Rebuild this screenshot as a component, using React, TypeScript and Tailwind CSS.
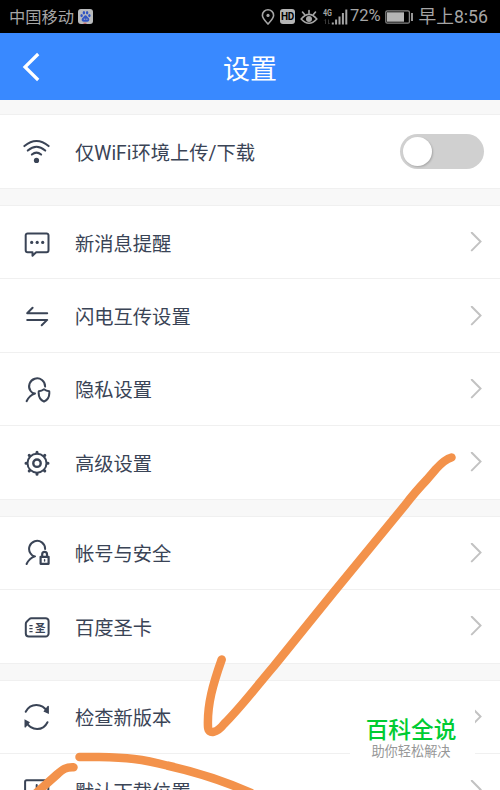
import type { ReactNode } from "react";

const stroke = {
  fill: "none",
  stroke: "currentColor",
  strokeWidth: 2,
  strokeLinecap: "round" as const,
  strokeLinejoin: "round" as const,
};

function Icon({ children }: { children: ReactNode }) {
  return (
    <svg viewBox="0 0 28 28" className="mt-px h-7 w-7 shrink-0 text-[#3a4456]" {...stroke}>
      {children}
    </svg>
  );
}

const icons = {
  wifi: (
    <Icon>
      <path d="M1.4 8.1Q13.5 -2 25.6 8.1M4.8 12.6Q13.5 4.9 22.2 12.6M8.9 16.6Q13.5 12.7 18.1 16.6" />
      <circle cx="13.5" cy="22.4" r="2.6" fill="currentColor" stroke="none" />
    </Icon>
  ),
  message: (
    <Icon>
      <path d="M4.6 4.4H23.6a1.9 1.9 0 0 1 1.9 1.9v15a1.9 1.9 0 0 1-1.9 1.9H13.2l-3.7 3.5v-3.5H4.6a1.9 1.9 0 0 1-1.9-1.9v-15a1.9 1.9 0 0 1 1.9-1.9z" />
      <g fill="currentColor" stroke="none">
        <circle cx="8.7" cy="13.4" r="1.6" />
        <circle cx="14.2" cy="13.4" r="1.6" />
        <circle cx="19.7" cy="13.4" r="1.6" />
      </g>
    </Icon>
  ),
  transfer: (
    <Icon>
      <path d="M24.2 11.2H4.2L9.6 5.7M4.2 17.9h20l-5.5 5.4" />
    </Icon>
  ),
  privacy: (
    <Icon>
      <path d="M22.1 10.6A8 8 0 1 0 7.6 15Q9 17.2 12 17.6Q6.6 19 3.6 25.2" />
      <path d="M21 13.3q2.3 1.8 5.2 1.9c.6 5-1 8.500-5.200 10.400c-4.200-1.900-5.800-5.400-5.200-10.400q2.900-.1 5.200-1.900z" />
    </Icon>
  ),
  gear: (
    <Icon>
      <circle cx="14" cy="14.2" r="9.5" />
      <circle cx="14" cy="14.2" r="3.7" strokeWidth="2.4" />
      <path
        strokeWidth="3"
        d="M14 3.200v.6M14 24.600v.6M3 14.200h.6M24.400 14.200h.6M6.200 6.400l.4.400M21.400 21.600l.4.400M21.800 6.400l-.4.400M6.600 21.600l-.4.400"
      />
    </Icon>
  ),
  account: (
    <Icon>
      <path d="M22.1 9.9A8 8 0 1 0 7.600 14.500Q9 17 12 17.400Q6.600 18.800 3.600 25" />
      <path strokeWidth="2.2" d="M17.600 17.800h8v7h-8zM19.200 17.500v-2.200a2.400 2.400 0 0 1 4.800 0v2.200" />
      <path strokeWidth="1.4" d="M21.600 20.800v1.200" />
    </Icon>
  ),
  card: (
    <Icon>
      <path d="M8.4 5.2H22.6a3 3 0 0 1 3 3v12.3a3 3 0 0 1-3 3H5.8a3 3 0 0 1-3-3V10.8a3 3 0 0 1 .9-2.100L6.300 6.100a3 3 0 0 1 2.100-.9z" />
      <path strokeLinecap="butt" strokeWidth="1.4" d="M6.400 12.600h3.200M6.400 15.600h3.200M6.400 18.600h3.200" />
      <text
        x="17.3"
        y="18.7"
        textAnchor="middle"
        fill="currentColor"
        stroke="none"
        className="font-['Noto_Sans_CJK_SC',sans-serif] text-[10.5px] font-bold"
      >
        圣
      </text>
    </Icon>
  ),
  refresh: (
    <Icon>
      <path d="M2.7 8.8C7.5-.1 19-.1 24.3 8.6M3 19C8.5 28.3 20 28.3 24.500 19.200" />
      <path
        fill="currentColor"
        stroke="none"
        d="M24.400 3.200a.8.800 0 0 1 1.500 0v7.800l-5.500-2.600zM1.500 16.200v7.900a.8.800 0 0 0 1.500 0l4-4.900z"
      />
    </Icon>
  ),
  download: (
    <Icon>
      <path d="M24.8 26H3.6a1.5 1.5 0 0 1-1.5-1.5V4.700a1.500 1.500 0 0 1 1.500-1.500h20.200A1.500 1.500 0 0 1 25.300 4.700v20M13.700 8v12M8.500 15l5.200 5.200L18.900 15" />
    </Icon>
  ),
};

const sections = [
  [
    { icon: icons.message, label: "新消息提醒" },
    { icon: icons.transfer, label: "闪电互传设置" },
    { icon: icons.privacy, label: "隐私设置" },
    { icon: icons.gear, label: "高级设置" },
  ],
  [
    { icon: icons.account, label: "帐号与安全" },
    { icon: icons.card, label: "百度圣卡" },
  ],
  [
    { icon: icons.refresh, label: "检查新版本" },
    { icon: icons.download, label: "默认下载位置" },
  ],
];

function Row({ icon, label, children }: { icon: ReactNode; label: string; children: ReactNode }) {
  return (
    <div className="flex h-[73.45px] items-center border-b border-[#f0f0f0] pl-[23px]">
      {icon}
      <span className="ml-6 grow pt-1 text-[19.3px] leading-none text-[#3a4456]">{label}</span>
      {children}
    </div>
  );
}

function Chevron() {
  return (
    <svg viewBox="0 0 12 20" className="mr-[18px] h-5 w-3" fill="none" stroke="#c2c2c2" strokeWidth="2" strokeLinecap="round">
      <path d="M1.8 .8l8.700 8.800l-8.700 8.800" />
    </svg>
  );
}

function StatusBar() {
  return (
    <div className="flex h-[33px] items-center bg-black pr-3 pl-[9px] text-[#a6a6a6]">
      <span className="pt-[3px] text-[16.3px] leading-none">中国移动</span>
      <svg viewBox="0 0 15 15" className="ml-1 h-[15px] w-[15px]">
        <rect width="15" height="15" rx="3" fill="#b9bbbd" />
        <g fill="#3156c4">
          <ellipse cx="3.6" cy="6.6" rx="1.2" ry="1.6" />
          <ellipse cx="5.9" cy="3.7" rx="1.2" ry="1.7" />
          <ellipse cx="9.1" cy="3.7" rx="1.2" ry="1.7" />
          <ellipse cx="11.4" cy="6.6" rx="1.2" ry="1.6" />
          <path d="M7.5 6.3c1.3 0 1.7 1.5 2.9 2.5c1.5 1.3 1.1 3.9-1 3.9H5.6c-2.1 0-2.5-2.6-1-3.9c1.2-1 1.6-2.5 2.9-2.5z" />
        </g>
        <path d="M5.8 10.2h1.5M8.2 10.2h1.3" stroke="#b9bbbd" />
        <path d="M5.5 14.2h3" stroke="#c34b4b" />
      </svg>
      <svg viewBox="0 0 14 16" className="ml-auto h-4 w-[14px]" fill="none" stroke="currentColor" strokeWidth="1.6">
        <path d="M7 15C4 11.7 1.4 9 1.4 6.4a5.6 5.6 0 0 1 11.2 0C12.6 9 10 11.7 7 15z" />
        <circle cx="7" cy="6.4" r="1.6" fill="currentColor" stroke="none" />
      </svg>
      <span className="ml-[5px] flex h-[15px] w-[15px] items-center justify-center rounded-[3px] bg-[#b5b5b5] font-['Roboto',sans-serif] text-[10px] leading-none font-bold tracking-[-0.3px] text-black">
        HD
      </span>
      <svg viewBox="0 0 18 16" className="ml-[5px] h-4 w-[18px]" fill="none" stroke="currentColor" strokeWidth="1.6" strokeLinecap="round">
        <path d="M1.2 10Q9 .8 16.8 10Q9 18.5 1.2 10zM9 4.5V1.6M4.6 5.6L2.5 3M13.4 5.6l2.1-2.6" />
        <circle cx="9" cy="9.9" r="3" fill="currentColor" stroke="none" />
      </svg>
      <svg viewBox="0 0 26 16" className="ml-[5px] h-4 w-[26px] overflow-visible" fill="currentColor">
        <text x="0" y="7.4" className="font-['Roboto',sans-serif] text-[9.5px] font-bold" textLength="9" lengthAdjust="spacingAndGlyphs">
          4G
        </text>
        <path d="M2.5 10.5v4.5M1.3 11.5l1.2-1.2M5.5 10.5v4.5M6.700 14l-1.200 1.200" stroke="#383838" fill="none" />
        <path d="M8.800 13.500h2v2h-2zM12.100 10.500h2v5h-2zM15.500 7.500h2v8h-2zM18.900 4h2v11.500h-2zM22.300.5h2v15h-2z" />
      </svg>
      <span className="ml-px font-['Roboto',sans-serif] text-[16.5px] leading-none">72%</span>
      <svg viewBox="0 0 28 14" className="ml-1 h-[14px] w-7">
        <rect x=".8" y=".8" width="23.6" height="12.4" rx="1.5" fill="none" stroke="#858585" strokeWidth="1.3" />
        <rect x="2" y="2.3" width="17" height="9.4" fill="#b5b5b5" />
        <path d="M27 3v8" stroke="#a6a6a6" strokeWidth="1.8" />
      </svg>
      <span className="ml-1.5 pt-[3px] font-['Roboto','Noto_Sans_CJK_SC',sans-serif] text-[17.7px] leading-none">早上8:56</span>
    </div>
  );
}

export default function App() {
  return (
    <div className="relative h-[790px] w-[500px] overflow-hidden bg-[#f8f8f8] font-['Roboto','Noto_Sans_CJK_SC',sans-serif]">
      <StatusBar />
      <header className="grid h-[67px] grid-cols-3 items-center bg-[#3989ff] text-white">
        <svg viewBox="0 0 18 30" className="ml-[22px] h-[30px] w-[18px]" fill="none" stroke="currentColor" strokeWidth="3.2">
          <path d="M16.2 2L3 15l13.2 13" />
        </svg>
        <h1 className="pt-[7px] text-center text-[27px] leading-none">设置</h1>
      </header>

      <main className="mt-3.5 flex flex-col gap-4">
        <section className="border-t border-[#f0f0f0] bg-white pt-[0.5px]">
          <Row icon={icons.wifi} label="仅WiFi环境上传/下载">
            <button
              role="switch"
              aria-checked="false"
              aria-label="仅WiFi环境上传/下载"
              className="mr-4 flex h-[35px] w-[84px] items-center rounded-full bg-[#d0d0d0] pl-[3px]"
            >
              <span className="h-[29px] w-[29px] rounded-full bg-white shadow-[1px_1px_2px_rgba(0,0,0,0.2)]" />
            </button>
          </Row>
        </section>
        {sections.map((rows, i) => (
          <section key={i} className="border-t border-[#f0f0f0] bg-white">
            {rows.map((row) => (
              <Row key={row.label} icon={row.icon} label={row.label}>
                <Chevron />
              </Row>
            ))}
          </section>
        ))}
      </main>

      {/* hand-drawn marks pointing at the last row */}
      <svg
        viewBox="0 0 500 790"
        className="pointer-events-none absolute inset-0 h-full w-full"
        fill="none"
        stroke="#f3924b"
        strokeWidth="8.5"
        strokeLinecap="round"
        strokeLinejoin="round"
      >
        <path d="M451.5 457.5C446 459 441 463.5 436 469L427 479.5C418 489 412 496 406 504L333 593L274 666C256 687 242 706 224 724C217 733 208.5 735 208 727C207 705 213 684 221.7 659.5" />
        <path d="M79.5 757H99C127 757.5 142 759 167 765.5C194 771.5 221 779.5 251 793" />
        <path d="M73.5 767.3C66 767 63 769 57 774.5L34 795" />
      </svg>

      <div className="absolute top-[703px] left-[350px] flex h-[72px] w-[125px] flex-col items-center bg-white pt-4 pr-[3px]">
        <div className="text-[22.7px] leading-6 font-medium text-[#00cc33]">百科全说</div>
        <div className="mt-px text-[13.2px] leading-4 text-[#979797]">助你轻松解决</div>
      </div>
    </div>
  );
}
